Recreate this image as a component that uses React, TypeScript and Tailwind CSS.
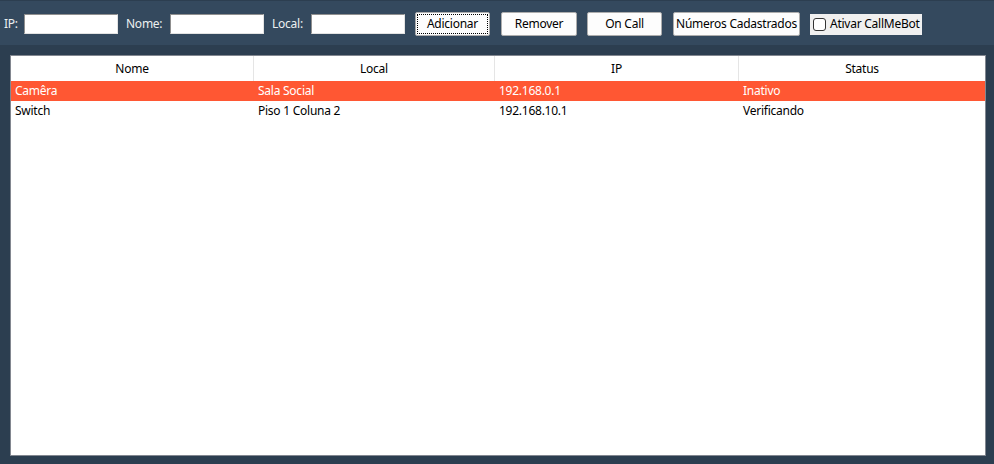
import React from "react";

const rows = [
  { nome: "Camêra", local: "Sala Social", ip: "192.168.0.1", status: "Inativo", alert: true },
  { nome: "Switch", local: "Piso 1 Coluna 2", ip: "192.168.10.1", status: "Verificando", alert: false },
];

const cols = "grid grid-cols-[243px_241px_244px_1fr]";

function Btn({ children, w, focus }: { children: React.ReactNode; w: string; focus?: boolean }) {
  return (
    <button
      className={`h-[24px] ${w} shrink-0 flex items-center justify-center rounded-[2px] border border-[#adadad] bg-[#fdfdfd] text-[12px] text-black p-[2px] whitespace-nowrap`}
    >
      <span
        className={`flex h-full w-full items-center justify-center whitespace-nowrap ${focus ? "outline-1 outline-dotted outline-black" : ""}`}
      >
        {children}
      </span>
    </button>
  );
}

function Input() {
  return (
    <div className="w-[94px] h-[20px] shrink-0 bg-white border border-[#8f8f8f] border-b-[#e3e3e3] border-r-[#e3e3e3]" />
  );
}

export default function App() {
  return (
    <div
      className="w-[994px] h-[464px] bg-[#2c3e50] flex flex-col overflow-hidden tracking-[-0.25px]"
      style={{ fontFamily: '"Noto Sans", "Open Sans", sans-serif' }}
    >
      <div className="h-[45px] shrink-0 bg-[#34495e] border-t border-[#2c3e50] pt-[2px] flex items-center text-[12px] text-[#ecf0f1] whitespace-nowrap">
        <span className="w-[24px] pl-[4px] shrink-0">IP:</span>
        <Input />
        <span className="w-[52px] pl-[8px] shrink-0">Nome:</span>
        <Input />
        <span className="w-[47px] pl-[8px] shrink-0">Local:</span>
        <Input />
        <div className="ml-[10px]">
          <Btn w="w-[75px]" focus>Adicionar</Btn>
        </div>
        <div className="ml-[11px]">
          <Btn w="w-[76px]">Remover</Btn>
        </div>
        <div className="ml-[10px]">
          <Btn w="w-[75px]">On Call</Btn>
        </div>
        <div className="ml-[11px]">
          <Btn w="w-[127px]">Números Cadastrados</Btn>
        </div>
        <div className="ml-[10px] h-[21px] w-[112px] bg-[#f0f0f0] flex items-center pl-[3px] text-black shrink-0">
          <span className="w-[13px] h-[13px] shrink-0 border border-[#333] rounded-[3px] bg-white" />
          <span className="ml-[4px] whitespace-nowrap">Ativar CallMeBot</span>
        </div>
      </div>
      <div className="flex-1 pt-[10px] pl-[10px] pr-[8px] pb-[8px]">
        <div className="h-full bg-white border border-[#828790] text-[12px] text-black">
          <div className={`${cols} h-[25px]`}>
            {["Nome", "Local", "IP", "Status"].map((h, i) => (
              <div
                key={h}
                className={`flex items-center justify-center ${i < 3 ? "border-r border-[#e5e5e5]" : ""}`}
              >
                {h}
              </div>
            ))}
          </div>
          {rows.map((r) => (
            <div
              key={r.nome}
              className={`${cols} h-[20px] items-center ${r.alert ? "bg-[#ff5733] text-white" : ""}`}
            >
              <div className="pl-[4px]">{r.nome}</div>
              <div className="pl-[4px]">{r.local}</div>
              <div className="pl-[4px]">{r.ip}</div>
              <div className="pl-[4px]">{r.status}</div>
            </div>
          ))}
        </div>
      </div>
    </div>
  );
}
